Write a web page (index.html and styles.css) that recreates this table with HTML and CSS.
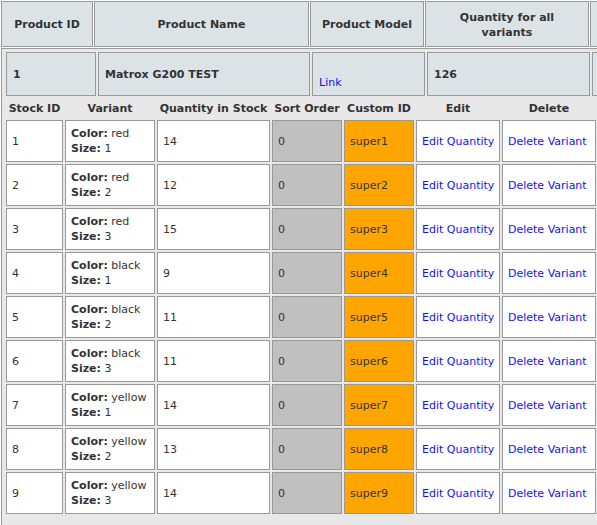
FILE: index.html
```html
<!DOCTYPE html>
<html>
<head>
<meta charset="utf-8">
<title>Product stock</title>
<link rel="stylesheet" href="styles.css">
</head>
<body>
<table class="main">
  <colgroup>
    <col class="m1"><col class="m2"><col class="m3"><col class="m4"><col class="m5">
  </colgroup>
  <tr>
    <th class="top">Product ID</th>
    <th class="top">Product Name</th>
    <th class="top">Product Model</th>
    <th class="top">Quantity for all variants</th>
    <th class="top">&nbsp;</th>
  </tr>
  <tr>
    <td class="holder" colspan="5">
      <table class="product">
        <colgroup>
          <col class="p1"><col class="p2"><col class="p3"><col class="p4"><col class="p5">
        </colgroup>
        <tr>
          <td class="pcell">1</td>
          <td class="pcell">Matrox G200 TEST</td>
          <td class="pcell plink">&nbsp;<br><a href="#">Link</a></td>
          <td class="pcell">126</td>
          <td class="pcell">&nbsp;</td>
        </tr>
      </table>
      <table class="stock">
        <colgroup>
          <col class="s1"><col class="s2"><col class="s3"><col class="s4"><col class="s5"><col class="s6"><col class="s7">
        </colgroup>
        <tr>
          <th class="sh">Stock ID</th>
          <th class="sh">Variant</th>
          <th class="sh">Quantity in Stock</th>
          <th class="sh">Sort Order</th>
          <th class="sh">Custom ID</th>
          <th class="sh">Edit</th>
          <th class="sh">Delete</th>
        </tr>
        <tr>
          <td class="cell">1</td>
          <td class="cell"><b>Color:</b> red<br><b>Size:</b> 1</td>
          <td class="cell">14</td>
          <td class="cell sort">0</td>
          <td class="cell custom">super1</td>
          <td class="cell"><a href="#">Edit Quantity</a></td>
          <td class="cell"><a href="#">Delete Variant</a></td>
        </tr>
        <tr>
          <td class="cell">2</td>
          <td class="cell"><b>Color:</b> red<br><b>Size:</b> 2</td>
          <td class="cell">12</td>
          <td class="cell sort">0</td>
          <td class="cell custom">super2</td>
          <td class="cell"><a href="#">Edit Quantity</a></td>
          <td class="cell"><a href="#">Delete Variant</a></td>
        </tr>
        <tr>
          <td class="cell">3</td>
          <td class="cell"><b>Color:</b> red<br><b>Size:</b> 3</td>
          <td class="cell">15</td>
          <td class="cell sort">0</td>
          <td class="cell custom">super3</td>
          <td class="cell"><a href="#">Edit Quantity</a></td>
          <td class="cell"><a href="#">Delete Variant</a></td>
        </tr>
        <tr>
          <td class="cell">4</td>
          <td class="cell"><b>Color:</b> black<br><b>Size:</b> 1</td>
          <td class="cell">9</td>
          <td class="cell sort">0</td>
          <td class="cell custom">super4</td>
          <td class="cell"><a href="#">Edit Quantity</a></td>
          <td class="cell"><a href="#">Delete Variant</a></td>
        </tr>
        <tr>
          <td class="cell">5</td>
          <td class="cell"><b>Color:</b> black<br><b>Size:</b> 2</td>
          <td class="cell">11</td>
          <td class="cell sort">0</td>
          <td class="cell custom">super5</td>
          <td class="cell"><a href="#">Edit Quantity</a></td>
          <td class="cell"><a href="#">Delete Variant</a></td>
        </tr>
        <tr>
          <td class="cell">6</td>
          <td class="cell"><b>Color:</b> black<br><b>Size:</b> 3</td>
          <td class="cell">11</td>
          <td class="cell sort">0</td>
          <td class="cell custom">super6</td>
          <td class="cell"><a href="#">Edit Quantity</a></td>
          <td class="cell"><a href="#">Delete Variant</a></td>
        </tr>
        <tr>
          <td class="cell">7</td>
          <td class="cell"><b>Color:</b> yellow<br><b>Size:</b> 1</td>
          <td class="cell">14</td>
          <td class="cell sort">0</td>
          <td class="cell custom">super7</td>
          <td class="cell"><a href="#">Edit Quantity</a></td>
          <td class="cell"><a href="#">Delete Variant</a></td>
        </tr>
        <tr>
          <td class="cell">8</td>
          <td class="cell"><b>Color:</b> yellow<br><b>Size:</b> 2</td>
          <td class="cell">13</td>
          <td class="cell sort">0</td>
          <td class="cell custom">super8</td>
          <td class="cell"><a href="#">Edit Quantity</a></td>
          <td class="cell"><a href="#">Delete Variant</a></td>
        </tr>
        <tr>
          <td class="cell">9</td>
          <td class="cell"><b>Color:</b> yellow<br><b>Size:</b> 3</td>
          <td class="cell">14</td>
          <td class="cell sort">0</td>
          <td class="cell custom">super9</td>
          <td class="cell"><a href="#">Edit Quantity</a></td>
          <td class="cell"><a href="#">Delete Variant</a></td>
        </tr>
      </table>
    </td>
  </tr>
</table>
</body>
</html>
```
FILE: styles.css
```css
html, body {
  margin: 0;
  padding: 0;
  background: #ffffff;
  overflow: hidden;
}

body {
  font-family: "DejaVu Sans", Verdana, sans-serif;
  font-size: 11px;
  line-height: 15px;
  color: #333333;
}

a {
  color: #1010ff;
  text-decoration: none;
}

table {
  border-collapse: separate;
  table-layout: fixed;
}

th, td {
  box-sizing: border-box;
}

.main {
  border-spacing: 1px;
  width: 691px;
}

.m1 { width: 92px; }
.m2 { width: 215px; }
.m3 { width: 114px; }
.m4 { width: 164px; }
.m5 { width: 100px; }

.top {
  height: 46px;
  padding: 1px 8px 0;
  background: #dce3e6;
  border: 1px solid #999999;
  font-weight: bold;
  text-align: center;
  vertical-align: middle;
}

.holder {
  background: #e8e8e8;
  border: 1px solid #999999;
  padding: 1px 0 12px 2px;
  vertical-align: top;
}

.product {
  border-spacing: 2px;
  width: 693px;
}

.p1 { width: 90px; }
.p2 { width: 212px; }
.p3 { width: 113px; }
.p4 { width: 163px; }
.p5 { width: 103px; }

.pcell {
  height: 44px;
  padding: 1px 6px 0;
  background: #dce3e6;
  border: 1px solid #999999;
  font-weight: bold;
  text-align: left;
  vertical-align: middle;
}

.plink {
  font-weight: normal;
}

.stock {
  border-spacing: 2px;
  width: 594px;
}

.s1 { width: 57px; }
.s2 { width: 90px; }
.s3 { width: 113px; }
.s4 { width: 70px; }
.s5 { width: 70px; }
.s6 { width: 84px; }
.s7 { width: 94px; }

.sh {
  padding: 1px 0 2px;
  font-weight: bold;
  text-align: center;
  white-space: nowrap;
}

.cell {
  height: 42px;
  padding: 5px 5px;
  background: #ffffff;
  border: 1px solid #999999;
  text-align: left;
  vertical-align: middle;
  white-space: nowrap;
}

.sort {
  background: #c0c0c0;
}

.custom {
  background: #ffa500;
}
```
